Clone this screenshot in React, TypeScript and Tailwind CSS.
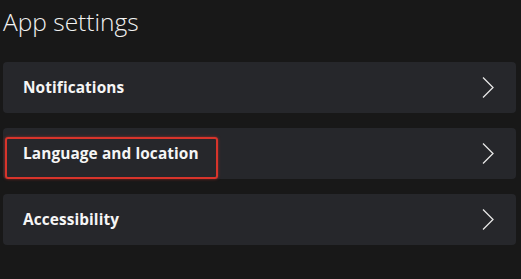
import React from 'react';

const items = ['Notifications', 'Language and location', 'Accessibility'];

const Chevron = () => (
  <svg width="12" height="21" viewBox="0 0 12 21" fill="none" className="shrink-0">
    <path d="M1 0.5 L11 10.5 L1 20.5" stroke="#e6e6e6" strokeWidth="1.3" />
  </svg>
);

export default function App() {
  return (
    <div
      className="w-[521px] h-[279px] bg-[#181818] text-white overflow-hidden"
      style={{ fontFamily: '"Open Sans", "Noto Sans", sans-serif' }}
    >
      <h1 className="pl-[3px] pt-[6px] text-[24.5px] font-light leading-[32px] text-[#f2f2f2]">App settings</h1>

      <div className="mt-[24px] ml-[3px] mr-[5px] flex flex-col gap-[15px]">
        {items.map((label, i) => (
          <div
            key={label}
            className="relative h-[51px] rounded-[4px] bg-[#26272b] flex items-center justify-between pl-[20px] pr-[22px]"
          >
            <span className="text-[15.4px] font-bold tracking-[0.1px] text-[#f5f5f5]">{label}</span>
            <Chevron />
            {i === 1 && (
              <div className="absolute left-[2px] top-[9px] w-[213px] h-[42px] rounded-[3px] border-2 border-[#d8342b] shadow-[0_0_3px_rgba(216,52,43,0.6)]" />
            )}
          </div>
        ))}
      </div>
    </div>
  );
}
